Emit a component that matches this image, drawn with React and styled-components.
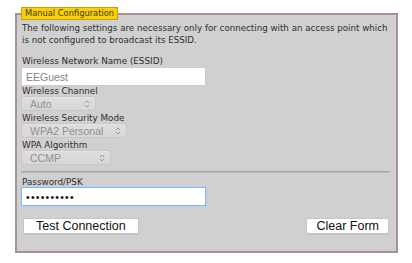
import React from "react";
import styled, { createGlobalStyle } from "styled-components";

const Global = createGlobalStyle`
  html, body { margin: 0; padding: 0; background: #ffffff; }
  #root { width: 412px; height: 263px; overflow: hidden; }
`;

const Page = styled.div`
  padding: 7px 14px 0 15px;
`;

const Fieldset = styled.fieldset`
  margin: 0;
  padding: 2px 6px 17px 5px;
  min-width: 0;
  border: 2px solid #a89290;
  background: #d0d0d0;
  display: flex;
  flex-direction: column;
  font-family: "DejaVu Sans", Verdana, sans-serif;
  color: #2e2e2e;
`;

const Legend = styled.legend`
  padding: 0 3px;
  margin-left: -1px;
  height: 13px;
  box-sizing: border-box;
  border: 1px solid #d39b00;
  background: #f5d00c;
  color: #463a10;
  font-size: 8.3px;
  line-height: 11px;
`;

const Description = styled.p`
  margin: 0 0 9px 0;
  font-size: 8.7px;
  line-height: 12px;
`;

const Label = styled.div`
  font-size: 8.8px;
  line-height: ${(p) => p.$lh || 10}px;
  margin-top: ${(p) => p.$mt || 0}px;
`;

const TextInput = styled.input`
  display: block;
  width: 185px;
  height: 19px;
  box-sizing: border-box;
  margin: 0 0 0 -1px;
  padding: 0 4px;
  border: 1px solid ${(p) => (p.$focused ? "#8fb7e6" : "#cdcdcd")};
  box-shadow: ${(p) => (p.$focused ? "0 0 0 1px #b5d2f1" : "none")};
  background: #ffffff;
  font-family: "Liberation Sans", Arial, sans-serif;
  font-size: 10.5px;
  color: ${(p) => (p.$focused ? "#111" : "#858585")};
  letter-spacing: ${(p) => (p.$focused ? "1.2px" : "0")};
  outline: none;
`;

const SelectBox = styled.div`
  display: flex;
  align-items: center;
  justify-content: space-between;
  width: ${(p) => p.$w}px;
  height: 15px;
  box-sizing: border-box;
  margin-left: -1px;
  padding: 0 5px 0 8px;
  border: 1px solid #c8c8c8;
  border-radius: 3px;
  background: linear-gradient(#dedede, #d7d7d7);
  box-shadow: 0 1px 0 #e4e4e4 inset;
  font-family: "Liberation Sans", Arial, sans-serif;
  font-size: 10.5px;
  color: #909090;
`;

const Chevron = () => (
  <svg width="6" height="10" viewBox="0 0 6 10">
    <path d="M1 4 L3 2 L5 4 M1 6 L3 8 L5 6" fill="none" stroke="#9a9a9a" strokeWidth="1" />
  </svg>
);

const Select = ({ w, children }) => (
  <SelectBox $w={w}>
    <span>{children}</span>
    <Chevron />
  </SelectBox>
);

const Divider = styled.hr`
  margin: 6px 0 0 -1px;
  border: none;
  border-top: 1px solid #a4a4a4;
  border-bottom: 1px solid #bcbcbc;
  height: 0;
`;

const ButtonRow = styled.div`
  display: flex;
  justify-content: space-between;
  margin-top: 12px;
  padding: 0 1px 0 1px;
`;

const Button = styled.button`
  height: 16px;
  padding: 0 ${(p) => p.$px}px;
  margin: 0;
  border: 1px solid #c6c6c6;
  border-radius: 2px;
  background: #ffffff;
  box-shadow: 0 1px 1px rgba(0, 0, 0, 0.08);
  font-family: "Liberation Sans", Arial, sans-serif;
  font-size: 12.5px;
  line-height: 14px;
  color: #111;
`;

export default function App() {
  return (
    <>
      <Global />
      <Page>
        <Fieldset>
          <Legend>Manual Configuration</Legend>
          <Description>
            The following settings are necessary only for connecting with an access point which is not
            configured to broadcast its ESSID.
          </Description>
          <Label $lh={12}>Wireless Network Name (ESSID)</Label>
          <TextInput readOnly value="EEGuest" />
          <Label>Wireless Channel</Label>
          <Select w={75}>Auto</Select>
          <Label $mt={2}>Wireless Security Mode</Label>
          <Select w={106}>WPA2 Personal</Select>
          <Label $mt={2}>WPA Algorithm</Label>
          <Select w={90}>CCMP</Select>
          <Divider />
          <Label $mt={4}>Password/PSK</Label>
          <TextInput $focused readOnly value="••••••••••" />
          <ButtonRow>
            <Button $px={12}>Test Connection</Button>
            <Button $px={9}>Clear Form</Button>
          </ButtonRow>
        </Fieldset>
      </Page>
    </>
  );
}
